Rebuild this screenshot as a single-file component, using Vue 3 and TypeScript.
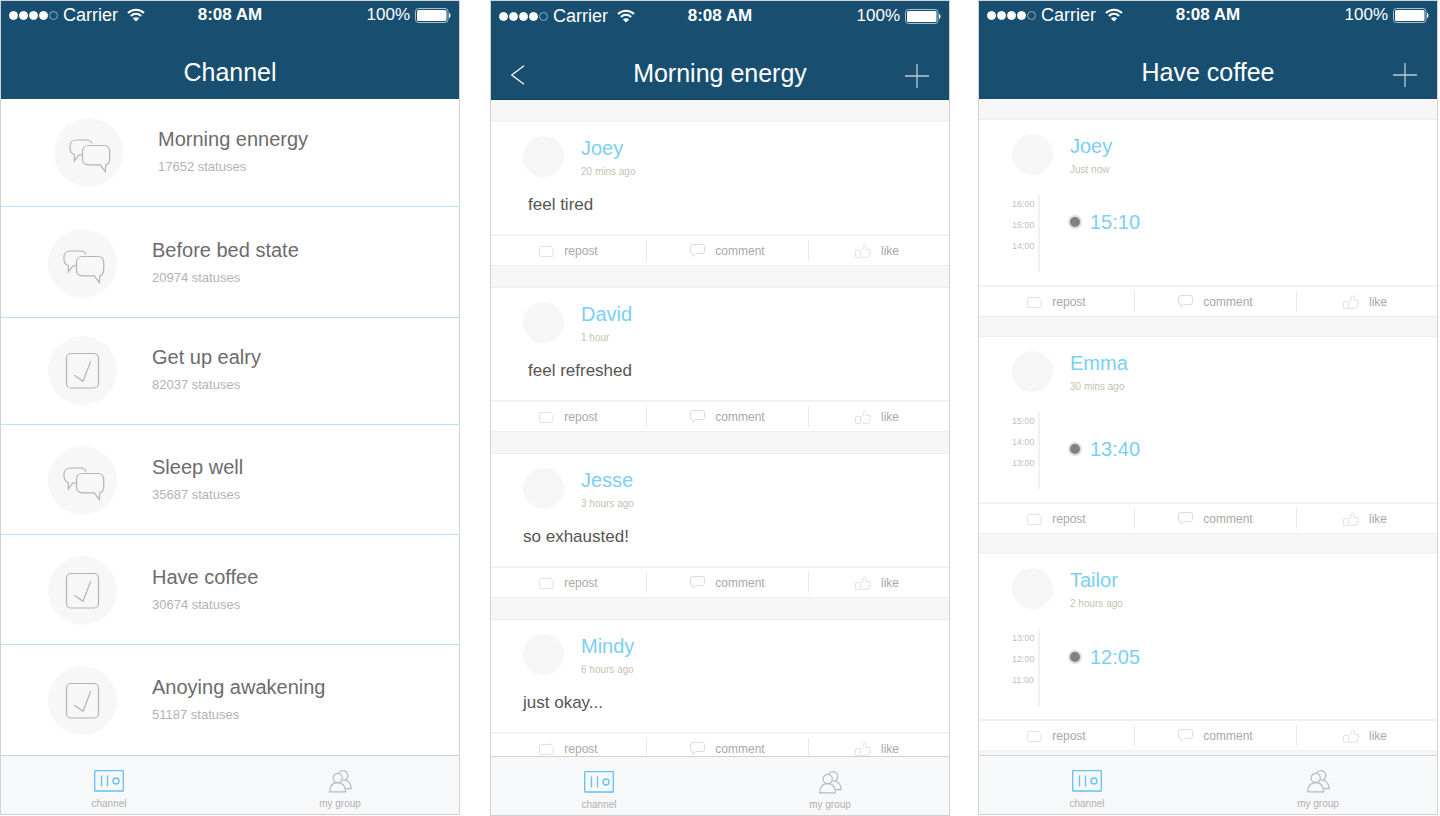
<script setup lang="ts">
import { computed, ref } from 'vue'

type ChannelKind = 'chat' | 'check'

interface Channel {
  name: string
  statuses: number
  kind: ChannelKind
}

interface Post {
  author: string
  when: string
  text?: string
  indented?: boolean
  hours?: number[]
  event?: string
}

interface Screen {
  id: string
  title: string
  back: boolean
  add: boolean
  channels?: Channel[]
  posts?: Post[]
}

const HOUR_STEP = 21

const screens = ref<Screen[]>([
  {
    id: 'channels',
    title: 'Channel',
    back: false,
    add: false,
    channels: [
      { name: 'Morning ennergy', statuses: 17652, kind: 'chat' },
      { name: 'Before bed state', statuses: 20974, kind: 'chat' },
      { name: 'Get up ealry', statuses: 82037, kind: 'check' },
      { name: 'Sleep well', statuses: 35687, kind: 'chat' },
      { name: 'Have coffee', statuses: 30674, kind: 'check' },
      { name: 'Anoying awakening', statuses: 51187, kind: 'check' },
    ],
  },
  {
    id: 'energy',
    title: 'Morning energy',
    back: true,
    add: true,
    posts: [
      { author: 'Joey', when: '20 mins ago', text: 'feel tired', indented: true },
      { author: 'David', when: '1 hour', text: 'feel refreshed', indented: true },
      { author: 'Jesse', when: '3 hours ago', text: 'so exhausted!' },
      { author: 'Mindy', when: '6 hours ago', text: 'just okay...' },
    ],
  },
  {
    id: 'coffee',
    title: 'Have coffee',
    back: false,
    add: true,
    posts: [
      { author: 'Joey', when: 'Just now', hours: [16, 15, 14], event: '15:10' },
      { author: 'Emma', when: '30 mins ago', hours: [15, 14, 13], event: '13:40' },
      { author: 'Tailor', when: '2 hours ago', hours: [13, 12, 11], event: '12:05' },
    ],
  },
])

const signal = computed(() => [true, true, true, true, false])

function eventOffset(post: Post): string {
  if (!post.hours || !post.event) return '0px'
  const [h, m] = post.event.split(':').map(Number)
  return `${Math.round((post.hours[0] - h - m / 60) * HOUR_STEP) - 3}px`
}
</script>

<template>
  <main class="board">
    <section v-for="screen in screens" :key="screen.id" class="phone" :class="screen.id" :aria-label="screen.title">
      <header class="top">
        <div class="status">
          <div class="carrier">
            <span class="signal"><i v-for="(on, n) in signal" :key="n" :class="{ on }"></i></span>
            <span>Carrier</span>
            <svg class="wifi" width="18" height="14" viewBox="0 0 18 14" fill="none" stroke="#fff" stroke-width="2.1">
              <path d="M1 5.1C5.6.6 12.4.6 17 5.1" />
              <path d="M3.9 8C6.9 5.2 11.1 5.2 14.1 8" />
              <path d="M9 13.6 5.9 10.4C7.6 8.8 10.4 8.8 12.1 10.4Z" fill="#fff" stroke="none" />
            </svg>
          </div>
          <strong>8:08 AM</strong>
          <div class="power">
            <span>100%</span>
            <svg width="36" height="15" viewBox="0 0 36 15">
              <rect x=".5" y=".5" width="32.5" height="14" rx="3" fill="none" stroke="#a9c0ce" />
              <rect x="2" y="2" width="29.5" height="11" rx="1.5" fill="#fff" />
              <path d="M34 5c2 .5 2 4.500 0 5z" fill="#fff" />
            </svg>
          </div>
        </div>
        <div class="bar">
          <button v-if="screen.back" type="button" class="back" aria-label="Back">
            <svg width="14" height="20" viewBox="0 0 14 20" fill="none" stroke="#fff" stroke-width="1.2">
              <path d="M13 .7.8 10 13 19.300" />
            </svg>
          </button>
          <h1>{{ screen.title }}</h1>
          <button v-if="screen.add" type="button" class="add" aria-label="Add">
            <svg width="24" height="24" viewBox="0 0 24 24" fill="none" stroke="#b9cad6" stroke-width="1.3">
              <path d="M12 0v24M0 12h24" />
            </svg>
          </button>
        </div>
      </header>

      <div class="content">
        <ul v-if="screen.channels" class="channels">
          <li v-for="channel in screen.channels" :key="channel.name">
            <a href="#" class="channel">
              <svg class="badge" width="69" height="69" viewBox="0 0 69 69" fill="none" stroke="#b4b4b4" stroke-width="1.2">
                <circle cx="34.500" cy="34.500" r="34.500" fill="#f7f7f7" stroke="none" />
                <template v-if="channel.kind === 'chat'">
                  <path d="M38 25.500C37 23 35.500 22 33 22H22.500C18.500 22 16 24.500 16 28V30.500C16 33.500 17.500 35.500 20.300 36.500V43L24.500 37.300 28.200 36.500" />
                  <path d="M34.500 27.500H49.500C53.500 27.500 55.700 30 55.700 33.500V41C55.700 44 54.500 46 51.800 46.800L51.300 53.500 46.300 46.800H34.500C31 46.800 28.500 44.500 28.500 41V33.500C28.500 30 31 27.500 34.500 27.500Z" />
                </template>
                <template v-else>
                  <rect x="18.500" y="17.500" width="32" height="34.500" rx="4.500" />
                  <path d="M26.300 39.300 35 45.300 42.700 25.300" />
                </template>
              </svg>
              <span class="label">
                <span class="name">{{ channel.name }}</span>
                <span class="count">{{ channel.statuses }} statuses</span>
              </span>
            </a>
          </li>
        </ul>

        <div v-else class="feed">
          <article v-for="post in screen.posts" :key="post.author" class="post">
            <div class="head">
              <span class="avatar"></span>
              <div>
                <h2>{{ post.author }}</h2>
                <p class="when">{{ post.when }}</p>
              </div>
            </div>
            <p v-if="post.text" class="text" :class="{ indented: post.indented }">{{ post.text }}</p>
            <div v-if="post.hours" class="timeline">
              <ol class="hours">
                <li v-for="hour in post.hours" :key="hour">{{ hour }}:00</li>
              </ol>
              <p class="event" :style="{ paddingTop: eventOffset(post) }"><i class="dot"></i>{{ post.event }}</p>
            </div>
            <div class="actions">
              <button type="button">
                <svg width="15" height="12" viewBox="0 0 15 12" fill="none" stroke="#e2e2e2">
                  <path d="M9 1.500H1.500Q.5 1.500.5 2.500V10.500Q.5 11.500 1.500 11.500H13Q14 11.500 14 10.500V3.500M9 1.500H12.500" />
                  <path d="M10.500 0 13 1.500 10.500 3Z" fill="#e2e2e2" stroke="none" />
                </svg>
                <span>repost</span>
              </button>
              <button type="button">
                <svg width="15" height="13" viewBox="0 0 15 13" fill="none" stroke="#dcdcdc">
                  <path d="M3 .5H12Q14.500.5 14.500 3V7Q14.500 9.500 12 9.500H6L3 12.300 2.800 9.500Q.5 9.500.5 7V3Q.5.5 3 .5Z" />
                </svg>
                <span>comment</span>
              </button>
              <button type="button" class="like">
                <svg width="16" height="14" viewBox="0 0 16 14" fill="none" stroke="#e0e0e0">
                  <rect x=".5" y="6.500" width="5" height="7" rx="1" />
                  <path d="M5.500 7C7.500 6 8.500 4.500 8.500 2.500 8.500 0 11 .3 11 2.500V5.500H14Q15.500 5.500 15.500 7L14.300 12Q14 13.300 12.500 13.300H7.500L5.500 12.500" />
                </svg>
                <span>like</span>
              </button>
            </div>
          </article>
        </div>
      </div>

      <nav class="tabs" aria-label="Sections">
        <a href="#">
          <svg width="30" height="22" viewBox="0 0 30 22" fill="none" stroke="#64bff8" stroke-width="1.300">
            <rect x=".7" y=".7" width="28.600" height="20.300" rx=".5" />
            <path d="M7.500 5.500V16.500M13.500 5.500V16.500" />
            <circle cx="22" cy="11" r="3" />
          </svg>
          <span>channel</span>
        </a>
        <a href="#">
          <svg width="23" height="23" viewBox="0 0 23 23" fill="none" stroke="#b9b9b9" stroke-width="1.200">
            <circle cx="8.700" cy="8" r="4.600" />
            <path d="M.7 21.800C.9 16 4 12.700 8.700 12.700S16.400 16 16.600 21.800Z" />
            <path d="M9.700 3.300C11 .2 15 0 17.200 1.900 19.800 4.200 19.300 8.400 16.300 9.800L13.600 10.300" />
            <path d="M16.300 9.800C20 11.500 22 14.500 22.200 18.600H16.800" />
          </svg>
          <span>my group</span>
        </a>
      </nav>
    </section>
  </main>
</template>

<style>
body {
  margin: 0;
  background: #fff;
}
</style>

<style scoped>
.board {
  display: flex;
  box-sizing: border-box;
  height: 100vh;
  padding-right: 2px;
  font-family: "Liberation Sans", Arial, sans-serif;
  color: #6c6c6c;
}

.phone {
  flex: 1 1 0;
  min-width: 0;
  display: flex;
  flex-direction: column;
  box-sizing: border-box;
  margin-bottom: 1px;
  border: 1px solid #d2d2d2;
  background: #fff;
}

.phone.energy {
  margin: 0 28px 0 30px;
}

h1,
h2,
p,
ul,
ol {
  margin: 0;
  padding: 0;
  font-weight: 400;
  list-style: none;
}

button {
  margin: 0;
  padding: 0;
  border: 0;
  background: none;
  font: inherit;
  color: inherit;
}

a {
  color: inherit;
  text-decoration: none;
}

svg {
  display: block;
  flex: none;
}

.top {
  flex: none;
  padding-bottom: 4px;
  background: #184f70;
  color: #fff;
}

.energy .top {
  padding-top: 1px;
  padding-bottom: 3px;
  border-bottom: 1px solid #0f4163;
}

.status {
  display: grid;
  grid-template-columns: 1fr auto 1fr;
  align-items: center;
  height: 28px;
  padding: 0 8px;
  font-size: 17px;
  line-height: 20px;
}

.carrier {
  display: flex;
  align-items: center;
  gap: 5px;
  font-size: 18px;
}

.wifi {
  margin-left: 4px;
}

.signal {
  display: flex;
  gap: 1px;
}

.signal i {
  box-sizing: border-box;
  width: 9px;
  height: 9px;
  border: 1px solid #8fabbc;
  border-radius: 50%;
}

.signal .on {
  border-color: #fff;
  background: #fff;
}

.power {
  display: flex;
  align-items: center;
  justify-content: flex-end;
  gap: 5px;
}

.bar {
  display: grid;
  grid-template-columns: 1fr auto 1fr;
  align-items: center;
  height: 44px;
  padding: 22px 20px 0;
}

.bar h1 {
  grid-column: 2;
  grid-row: 1;
  padding-bottom: 2px;
  font-size: 25px;
  line-height: 30px;
}

.back {
  grid-column: 1;
  grid-row: 1;
  justify-self: start;
  padding-top: 2px;
}

.add {
  grid-column: 3;
  grid-row: 1;
  justify-self: end;
  padding-top: 4px;
}

.content {
  flex: 1 1 0;
  min-height: 0;
  overflow: hidden;
}

.channels li {
  border-bottom: 1px solid #b5e3f8;
}

.channels li:last-child {
  border-bottom: 0;
}

.channel {
  display: flex;
  gap: 35px;
  padding: 21px 47px 19px;
}

.channels li:nth-child(1) .channel {
  padding: 19px 53px;
}

.channels li:nth-child(2) .channel {
  padding-top: 22px;
}

.channels li:nth-child(3) .channel {
  padding-top: 18px;
}

.label {
  display: flex;
  flex-direction: column;
  gap: 8px;
  padding-top: 9px;
}

.name {
  font-size: 20px;
  line-height: 24px;
}

.count {
  font-size: 13px;
  line-height: 16px;
  color: #b3b3b3;
}

.feed {
  display: flex;
  flex-direction: column;
  gap: 21px;
  padding: 21px 0;
  background: #f6f6f6;
}

.energy .feed {
  gap: 23px;
  padding-top: 22px;
}

.post {
  flex: none;
  padding-top: 14px;
  background: #fff;
  box-shadow: 0 0 0 1px #efefef;
}

.head {
  display: flex;
  gap: 17px;
  height: 42px;
  padding-left: 32px;
}

.coffee .head {
  padding-left: 33px;
}

.avatar {
  width: 41px;
  height: 41px;
  border-radius: 50%;
  background: #f6f6f6;
}

h2 {
  font-size: 20px;
  line-height: 24px;
  color: #7acff4;
}

.when {
  margin-top: 6px;
  font-size: 10px;
  line-height: 12px;
  color: #c8c0b4;
}

.text {
  padding: 17px 32px 19px;
  font-size: 17px;
  line-height: 20px;
  color: #555;
}

.text.indented {
  padding-left: 37px;
}

.timeline {
  display: flex;
  gap: 28px;
  height: 77px;
  padding: 19px 0 13px 33px;
}

.hours {
  display: flex;
  flex-direction: column;
  gap: 9px;
  width: 26px;
  padding-top: 3px;
  border-right: 2px solid #f1f1f1;
  font-size: 9px;
  line-height: 12px;
  color: #c8c0b4;
}

.event {
  display: flex;
  align-items: center;
  align-self: flex-start;
  gap: 8px;
  font-size: 20px;
  line-height: 24px;
  color: #7acff4;
}

.dot {
  width: 10px;
  height: 10px;
  border: 2px solid #dedede;
  border-radius: 50%;
  background: #808080;
}

.actions {
  display: grid;
  grid-template-columns: 155fr 162fr 141fr;
  align-items: center;
  height: 29px;
  border-top: 2px solid #f1f1f1;
  font-size: 12px;
  line-height: 14px;
  color: #a8a8a8;
}

.actions button {
  display: flex;
  align-items: center;
  justify-content: center;
  gap: 10px;
  height: 21px;
}

.actions button + button {
  border-left: 1px solid #e8e8e8;
}

.actions .like {
  padding-right: 4px;
}

.tabs {
  flex: none;
  display: grid;
  grid-template-columns: 216fr 242fr;
  border-top: 1px solid #d2d2d2;
  background: #f7f8fa;
}

.tabs a {
  display: flex;
  flex-direction: column;
  align-items: center;
  justify-content: space-between;
  height: 40px;
  padding: 14px 0 4px;
  font-size: 10px;
  line-height: 12px;
  color: #b0b0b0;
}

.tabs a + a {
  padding-left: 4px;
}
</style>
